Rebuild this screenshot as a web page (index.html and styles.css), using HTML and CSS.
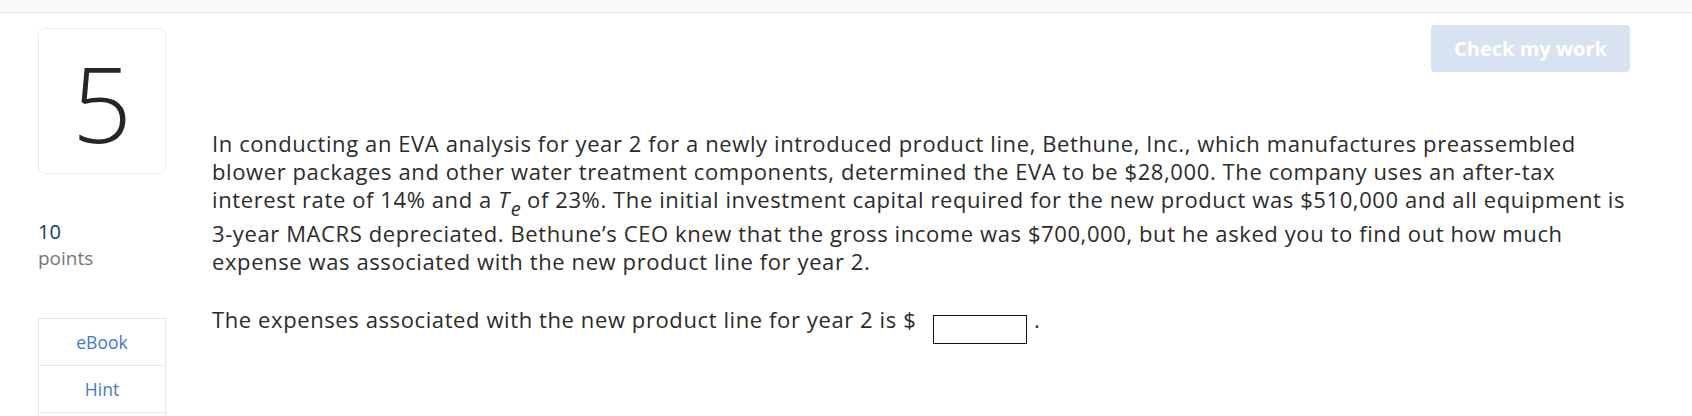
FILE: index.html
```html
<!DOCTYPE html>
<html lang="en">
<head>
<meta charset="utf-8">
<title>Question 5</title>
<link rel="stylesheet" href="styles.css">
</head>
<body>
<header class="topbar"></header>
<div class="question">
  <aside class="side">
    <div class="qnum">5</div>
    <div class="points">
      <span class="pts-val">10</span>
      <span class="pts-label">points</span>
    </div>
    <ul class="tools">
      <li><a href="#">eBook</a></li>
      <li><a href="#">Hint</a></li>
      <li></li>
    </ul>
  </aside>
  <main class="content">
    <div class="actions"><button class="check" type="button">Check my work</button></div>
    <p class="prompt">In conducting an EVA analysis for year 2 for a newly introduced product line, Bethune, Inc., which manufactures preassembled blower packages and other water treatment components, determined the EVA to be $28,000. The company uses an after-tax interest rate of 14% and a <i>T</i><sub><i>e</i></sub> of 23%. The initial investment capital required for the new product was $510,000 and all equipment is 3-year MACRS depreciated. Bethune’s CEO knew that the gross income was $700,000, but he asked you to find out how much expense was associated with the new product line for year 2.</p>
    <p class="answer">The expenses associated with the new product line for year 2 is $ <input class="field" type="text" aria-label="answer"> .</p>
  </main>
</div>
</body>
</html>
```

FILE: styles.css
```css
* { box-sizing: border-box; }
html, body { margin: 0; padding: 0; background: #fff; }
body {
  font-family: "Open Sans", "Liberation Sans", sans-serif;
  color: #2b2b2b;
  height: 416px;
  overflow: hidden;
}
.topbar {
  height: 13px;
  background: #fafafa;
  border-bottom: 1px solid #e8e8e8;
}
.question {
  display: flex;
  padding-left: 38px;
  padding-right: 50px;
}
.side {
  width: 128px;
  flex: none;
  padding-top: 15px;
}
.qnum {
  height: 146px;
  border: 1px solid #ececec;
  border-radius: 7px;
  display: flex;
  align-items: center;
  justify-content: center;
  font-size: 105px;
  font-weight: 350;
  color: #262626;
  line-height: 1;
  padding-top: 2px;
}
.points {
  margin-top: 45px;
  display: flex;
  flex-direction: column;
  font-size: 19px;
  line-height: 26px;
}
.pts-val { color: #163a6a; font-size: 20px; }
.pts-label { color: #767676; }
.tools {
  list-style: none;
  margin: 47px 0 0;
  padding: 0;
  border: 1px solid #e8e8e8;
  border-bottom: none;
}
.tools li {
  height: 47px;
  border-bottom: 1px solid #e8e8e8;
  display: flex;
  align-items: center;
  justify-content: center;
}
.tools a {
  color: #4379c8;
  text-decoration: none;
  font-size: 17.5px;
}
.content {
  flex: 1;
  margin-left: 46px;
}
.actions {
  display: flex;
  justify-content: flex-end;
  padding-top: 12px;
  padding-right: 12px;
}
.check {
  width: 199px;
  height: 47px;
  border: none;
  border-radius: 4px;
  background: #d8e3f1;
  color: #fff;
  font-family: "Open Sans", "Liberation Sans", sans-serif;
  font-weight: 700;
  font-size: 20px;
}
.prompt {
  margin: 57px 0 0;
  font-size: 22px;
  line-height: 28px;
  letter-spacing: 0.6px;
}
.prompt sub {
  font-size: 20px;
  line-height: 1;
  vertical-align: -8px;
  letter-spacing: 0;
  margin-left: 1px;
}
.answer {
  margin: 30px 0 0;
  font-size: 22px;
  line-height: 28px;
  letter-spacing: 0.6px;
}
.field {
  width: 94px;
  height: 29px;
  border: 1px solid #111;
  vertical-align: -6px;
  margin: 0 1px 0 10px;
}
```
